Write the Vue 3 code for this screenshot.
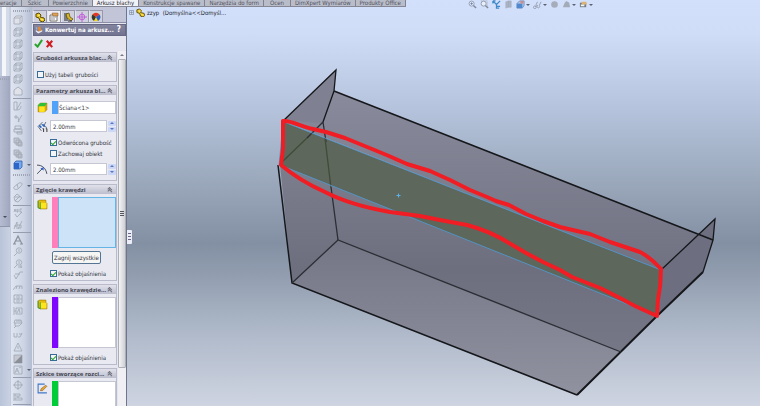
<script setup>
import { ref } from 'vue'

const commandTabs = ['eracje', 'Szkic', 'Powierzchnie', 'Arkusz blachy', 'Konstrukcje spawane', 'Narzędzia do form', 'Ocen', 'DimXpert Wymiarów', 'Produkty Office']
const activeTab = ref(3)

const viewTools = [
  { id: 'zoom-fit', name: 'Dopasuj' },
  { id: 'zoom-area', name: 'Powiększ obszar' },
  { id: 'prev', name: 'Poprzedni widok' },
  { id: 'section', name: 'Przekrój' },
  { id: 'orient', name: 'Orientacja', menu: true },
  { id: 'glasses', name: 'Ukryj', menu: true },
  { id: 'ball', name: 'Wygląd' },
  { id: 'scene', name: 'Scena', menu: true },
  { id: 'settings', name: 'Ustawienia', menu: true }
]

const sideTools = [
  'cube', 'wire', 'wire', 'wire', 'wire', 'wire', 'house', '-',
  'dim', 'plus', 'print', 'stack', 'stack', 'solid+', '=',
  'loop+', 'loopb', '-', 'abc', 'note', '-',
  'letter', 'balloon', 'balloons', 'rough', 'weld', 'table', 'datum', 'mag', 'hook', 'warn', 'hatch', 'block+', '-',
  'target', 'align', '-'
].map((t) => ({ id: t.replace('+', ''), menu: t.endsWith('+') }))

const managerTabs = ['part', 'props', 'config', 'dimx', 'display']

const useTable = ref(false)
const face = ref('Ściana<1>')
const thickness = ref('2.00mm')
const reversed = ref(true)
const keepBody = ref(false)
const radius = ref('2.00mm')
const calloutBends = ref(true)
const calloutRips = ref(true)
</script>

<template>
  <div class="app">
    <svg class="defs" aria-hidden="true">
      <defs>
        <g id="i-part">
          <path d="M1 2l3-1 2 2-1 2 4 1 1 2-2 2-3-1-1-3-3-1z" fill="#e9c71c" stroke="#5c4a08" stroke-width="1" />
          <path d="M3 3l2 1M6 7l2 1" stroke="#fff39a" stroke-width="1" />
        </g>
        <g id="i-face">
          <path d="M1 3l2-2h6v6l-2 2H1z" fill="#e0a800" stroke="#9a7800" stroke-width=".5" />
          <path d="M1 3l2-2h6L7 4H1z" fill="#2fc03a" />
          <path d="M2 4h5v5H2z" fill="#ffe51e" />
        </g>
        <g id="i-edge">
          <path d="M1 2l1-1h6v2l1 1v5H3V8H1z" fill="#e9bd0c" stroke="#9a7c00" stroke-width=".6" />
          <path d="M1 1.500v6.500l2 1V3" fill="none" stroke="#2fa23a" stroke-width=".8" />
          <path d="M3.500 3.500h5v5h-5z" fill="#ffe51e" />
        </g>
      </defs>
    </svg>

    <header class="top">
      <nav class="tabs">
        <button v-for="(t, i) in commandTabs" :key="t" :class="{ active: i === activeTab, short: t.length < 6 }" @click="activeTab = i">{{ t }}</button>
      </nav>
      <div class="view-tools">
        <button v-for="t in viewTools" :key="t.id" :aria-label="t.name" :class="{ menu: t.menu }">
          <svg viewBox="0 0 10 10">
            <template v-if="t.id === 'zoom-fit' || t.id === 'zoom-area'">
              <circle cx="4" cy="4" r="2.8" fill="#e8eefa" stroke="#8d98ab" />
              <path d="M6 6l3 3" stroke="#80899a" stroke-width="1.6" />
              <path v-if="t.id === 'zoom-fit'" d="M2.5 4h3M4 2.500v3" stroke="#57749f" stroke-width=".8" />
              <path v-else d="M1 1h7v7" fill="none" stroke="#a2a9b8" stroke-dasharray="1 1" />
            </template>
            <path v-else-if="t.id === 'prev'" d="M1 1l4 4M9 1L5 5v4h3M1 1h3M1 1v3M5 7h4" fill="none" stroke="#4089c8" stroke-width="1.4" />
            <path v-else-if="t.id === 'section'" d="M2 2l3-1v7l-3 1zM5 1h3v7H5z" fill="#aab3c5" stroke="#a0a9bb" stroke-width=".6" />
            <template v-else-if="t.id === 'orient'">
              <path d="M1 4l3-3h5v5L7 9H1z" fill="#a9c8ed" stroke="#5f83b4" stroke-width=".8" />
              <path d="M1 4h6v5H1z" fill="#5189d0" /><path d="M5 1h3v3H5z" fill="#d88783" />
            </template>
            <path v-else-if="t.id === 'glasses'" d="M3 7a1.500 1.500 0 1 1-2 0 1.500 1.500 0 0 1 2 0l2-1a1.500 1.500 0 1 0 2 0l2-4M3 6l2-4" fill="none" stroke="#818a9c" stroke-width=".8" />
            <circle v-else-if="t.id === 'ball'" cx="5" cy="5" r="3.700" fill="#a5adba" />
            <path v-else-if="t.id === 'scene'" d="M1 8l2-5 2-2 3 2 1 5z" fill="#a3abb9" />
            <template v-else>
              <path d="M1 3h7v5H1z" fill="#737a88" /><path d="M3 2h5l1 3H3z" fill="#ddb276" /><path d="M2 5h4v2H2z" fill="#f4f3ea" />
            </template>
          </svg>
        </button>
      </div>
    </header>

    <main class="body">
      <div class="gutter">
        <div class="slot"></div>
        <div class="dock"><i class="dots"></i><i class="arrow"></i></div>
      </div>

      <aside class="side">
        <i class="dots"></i>
        <template v-for="(t, i) in sideTools" :key="i">
          <hr v-if="t.id === '-'" />
          <i v-else-if="t.id === '='" class="dots split"></i>
          <button v-else :class="{ menu: t.menu }" :aria-label="t.id">
            <svg viewBox="0 0 10 10">
              <path v-if="t.id === 'cube'" d="M1 3l2-2h6v6L7 9H1zM1 3h6v6M7 3l2-2" fill="#dfe2e8" stroke="#a2a8b3" />
              <path v-else-if="t.id === 'wire'" d="M1 3l2-2h6v6L7 9H1zM1 3h6v6M7 3l2-2M3 1v6h6M3 7L1 9" />
              <path v-else-if="t.id === 'house'" d="M1 4l4-3 4 3v5H1z" fill="#dfe2e8" />
              <path v-else-if="t.id === 'dim'" d="M1 1h3v8H1zM4 8l4-7M4 9c3 0 4-2 4-4" />
              <path v-else-if="t.id === 'plus'" d="M1 4h4M3 2v4M5 9l4-7M5 4l1 5" />
              <path v-else-if="t.id === 'print'" d="M2 1h6v3H2zM1 4h8v3H1zM4 7h5v2H4z" />
              <path v-else-if="t.id === 'stack'" d="M1 1h5v5H1zM3 3h5v5H3zM5 5h4v4H5z" fill="#c5cad4" />
              <g v-else-if="t.id === 'solid'"><path d="M1 3l2-2h6v6L7 9H1z" fill="#77a9ee" stroke="#315da8" /><path d="M1 3h5v6H1z" fill="#2e66c8" stroke="none" /></g>
              <path v-else-if="t.id === 'loop'" d="M1 6l5-4c3-1 4 1 2 3L5 8C2 9 0 8 1 6zM4 3l1 4" />
              <path v-else-if="t.id === 'loopb'" d="M1 4l3-3 5 4-4 4-3-1zM2 8l5-5M2 4h5" />
              <path v-else-if="t.id === 'abc'" d="M1 4l1-3 1 3M4 1v3h1V1M9 1H7v3h2M2 6l2 3 5-5" />
              <path v-else-if="t.id === 'note'" d="M1 9l3-7v7M1 6h3M5 9l4-8M4 5h4v3H5" />
              <path v-else-if="t.id === 'letter'" class="bold" d="M1 9l4-8 4 8M3 6h4M0 9h3M7 9h3" />
              <g v-else-if="t.id === 'balloon' || t.id === 'balloons'"><circle cx="6" cy="3.500" r="2.700" /><path d="M4 6L1 9M6 2v3" /><path v-if="t.id === 'balloons'" d="M5 8h4M8 6v3" /></g>
              <path v-else-if="t.id === 'rough'" d="M1 5l2 4 4-7h3M2 4h5" />
              <path v-else-if="t.id === 'weld'" d="M0 8l3-4h6M3 7l1-3M6 7l1-3M9 7V4" />
              <path v-else-if="t.id === 'table'" d="M1 1h8v8H1zM1 5h8M3 3h1M6 3h1M3 7h1M6 7h1M5 1v8" />
              <path v-else-if="t.id === 'datum'" d="M1 1v8M3 2h6v6H3zM4 7l2-4 1 4M1 5h2" />
              <path v-else-if="t.id === 'mag'" d="M2 2h6l1 3H1zM2 5v3h4l3-3M3 3h5M3 8L1 10" />
              <path v-else-if="t.id === 'hook'" d="M1 3v4h3V3M5 7h2l2-4M6 4h3" />
              <path v-else-if="t.id === 'warn'" d="M5 1l4 8H1zM5 4v3" />
              <g v-else-if="t.id === 'hatch'"><path d="M1 1h8v8H1z" fill="#c5c8d0" /><path d="M9 1v8H1z" fill="#8b8f98" stroke="none" /></g>
              <path v-else-if="t.id === 'block'" d="M1 1h8v8H1zM2 8l2-5 2 5M3 6h2M6 3l2-1" />
              <g v-else-if="t.id === 'target'"><circle cx="5" cy="5" r="3.500" /><path d="M5 0v10M0 5h10" /></g>
              <path v-else d="M1 1v8M2 2h5v2H2zM2 6h7v2H2zM5 4v2" />
            </svg>
          </button>
        </template>
      </aside>

      <section class="panel">
        <nav class="manager">
          <button v-for="(m, i) in managerTabs" :key="m" :class="{ on: i === 1 }" :aria-label="m">
            <svg viewBox="0 0 10 10">
              <use v-if="m === 'part'" href="#i-part" />
              <g v-else-if="m === 'props'"><path d="M1 3h7v6H1z" fill="#fff" stroke="#77716a" /><path d="M2 5h5M2 7h4" stroke="#8a8f99" /><path d="M3 1h6v3H6L4 4z" fill="#dca15b" stroke="#80572b" stroke-width=".5" /></g>
              <g v-else-if="m === 'config'"><path d="M1 1h4v8H1z" fill="#777c82" /><path d="M3 2l3-1 1 4 3 2-2 2-4-3z" fill="#d6b624" stroke="#54480f" stroke-width=".7" /><path d="M5 9h4" stroke="#333" /></g>
              <g v-else-if="m === 'dimx'" fill="none" stroke="#c25ed8"><circle cx="5" cy="5" r="2.800" /><path d="M5 0v10M0 5h10" /></g>
              <g v-else><circle cx="5" cy="5" r="4.300" fill="#f3d522" /><path d="M5 5L1.500 2.500A4.300 4.300 0 0 1 8.500 2.500z" fill="#e33227" /><path d="M5 5l3.500-2.500A4.300 4.300 0 0 1 7 9z" fill="#2759c9" /><path d="M5 5L1.500 2.500A4.300 4.300 0 0 0 3 8.800z" fill="#353535" /></g>
            </svg>
          </button>
        </nav>

        <h1 class="title">
          <svg viewBox="0 0 10 10"><path d="M1 5l3 2 5-2v2L4 9.500 1 7z" fill="#e9eaf0" /><path d="M4 1h3v3l2 1-4 2-1-2z" fill="#e58a2c" /><path d="M1 1l2 1v3L1 4z" fill="#9aa8cf" /></svg>
          <span>Konwertuj na arkusz...</span>
          <button aria-label="Pomoc">?</button>
        </h1>

        <div class="confirm">
          <button aria-label="OK"><svg viewBox="0 0 10 10"><path d="M1 5.500l3 3L9 1" fill="none" stroke="#28a52d" stroke-width="2.200" /></svg></button>
          <button aria-label="Anuluj"><svg viewBox="0 0 10 10"><path d="M2 2l6 7M8 2L2 9" fill="none" stroke="#cf1d22" stroke-width="2.400" /></svg></button>
        </div>

        <div class="scroll">
          <div class="groups">
            <section class="group">
              <h2><span>Grubości arkusza blac...</span><i class="chev"></i></h2>
              <div class="content single">
                <label class="check"><input v-model="useTable" type="checkbox" />Użyj tabeli grubości</label>
              </div>
            </section>

            <section class="group">
              <h2><span>Parametry arkusza bl...</span><i class="chev"></i></h2>
              <div class="content params">
                <div class="row">
                  <svg viewBox="0 0 10 10"><use href="#i-face" /></svg>
                  <div class="pick blue"><input v-model="face" aria-label="Ściana" /></div>
                </div>
                <div class="row">
                  <svg viewBox="0 0 10 10"><path d="M1 5l4-4M1 5l3 4M4 3l5 3M8 1L6 5" fill="none" stroke="#536076" stroke-width=".8" /><path d="M2 4l2 2M5 3l2 2" stroke="#2b68c5" stroke-width="1.500" /><path d="M6 7v3M9 7v3M5 7h1M8 7h1" stroke="#222" stroke-width=".8" /></svg>
                  <input v-model="thickness" class="num" aria-label="Grubość" />
                  <div class="spin"><button aria-label="Więcej"></button><button aria-label="Mniej"></button></div>
                </div>
                <div class="checks">
                  <label class="check"><input v-model="reversed" type="checkbox" />Odwrócona grubość</label>
                  <label class="check"><input v-model="keepBody" type="checkbox" />Zachowaj obiekt</label>
                </div>
                <div class="row">
                  <svg viewBox="0 0 10 10"><path d="M0 1c5 0 8 3 9 8M0 9l6-6" fill="none" stroke="#343c4d" stroke-width=".8" /><path d="M3 4l3-1v3z" fill="#2d62c8" /></svg>
                  <input v-model="radius" class="num" aria-label="Promień" />
                  <div class="spin"><button aria-label="Więcej"></button><button aria-label="Mniej"></button></div>
                </div>
              </div>
            </section>

            <section class="group">
              <h2><span>Zgięcie krawędzi</span><i class="chev"></i></h2>
              <div class="content">
                <div class="row list">
                  <svg viewBox="0 0 10 10"><use href="#i-edge" /></svg>
                  <div class="pick pink focus" role="listbox" aria-label="Zgięcie krawędzi"><div class="box"></div></div>
                </div>
                <button class="collect">Zagnij wszystkie</button>
                <label class="check inset"><input v-model="calloutBends" type="checkbox" />Pokaż objaśnienia</label>
              </div>
            </section>

            <section class="group">
              <h2><span>Znaleziono krawędzie...</span><i class="chev"></i></h2>
              <div class="content">
                <div class="row list">
                  <svg viewBox="0 0 10 10"><use href="#i-edge" /></svg>
                  <div class="pick violet" role="listbox" aria-label="Znaleziono krawędzie"><div class="box"></div></div>
                </div>
                <label class="check inset"><input v-model="calloutRips" type="checkbox" />Pokaż objaśnienia</label>
              </div>
            </section>

            <section class="group">
              <h2><span>Szkice tworzące rozci...</span><i class="chev"></i></h2>
              <div class="content">
                <div class="row list">
                  <svg viewBox="0 0 10 10"><path d="M7 1H1v8h8" fill="none" stroke="#4077c9" /><path d="M3 7l1-2 4-3 1 1-4 4z" fill="#e9a831" stroke="#7a4d18" stroke-width=".5" /></svg>
                  <div class="pick green" role="listbox" aria-label="Szkice"><div class="box"></div></div>
                </div>
              </div>
            </section>
          </div>
          <div class="bar"><i class="up"></i><div class="thumb"><i></i></div></div>
        </div>
      </section>

      <section class="canvas">
        <div class="tree">
          <svg class="plus" viewBox="0 0 6 6"><path d="M.5.5h5v5h-5zM1.500 3h3M3 1.500v3" fill="none" stroke="#8992a3" /></svg>
          <svg class="part" viewBox="0 0 10 10"><use href="#i-part" /></svg>
          <span>zzyp&nbsp; (Domyślna&lt;&lt;Domyśl...</span>
        </div>
        <div class="handle"><i></i></div>
        <svg class="model" viewBox="127 7 633 399" preserveAspectRatio="xMidYMid meet">
          <defs>
            <linearGradient id="wall" x1="0" y1="0" x2="0" y2="1"><stop offset="0" stop-color="#898b9c" /><stop offset="1" stop-color="#707282" /></linearGradient>
            <linearGradient id="front" x1="0" y1="0" x2="0" y2="1"><stop offset="0" stop-color="#7c7e8d" /><stop offset=".45" stop-color="#6d6f7f" /><stop offset="1" stop-color="#7a7c8c" /></linearGradient>
            <linearGradient id="floor" x1="0" y1="0" x2="0" y2="1"><stop offset="0" stop-color="#747686" /><stop offset="1" stop-color="#9092a0" /></linearGradient>
          </defs>
          <path d="M334 91L713 240 661 270 283 121 323 122z" fill="url(#wall)" />
          <path d="M336 70L283 121 323 123 334 91z" fill="#7f8192" />
          <path d="M280 165L657 316 621 352 577 395 292 283z" fill="url(#front)" />
          <path d="M338 240L621 352 577 395 292 283z" fill="url(#floor)" />
          <path d="M715 219L661 270 657 316 703 272 713 240z" fill="#6d6f80" />
          <path d="M284 122L661 270 657 316 280 165z" fill="#5d675b" />
          <g fill="none" stroke="#15171b" stroke-width="1.300">
            <path d="M283 121L336 70 334 91 323 122" />
            <path d="M334 91L713 240" stroke-width="1.600" />
            <path d="M661 270L715 219 713 240 703 272" />
            <path d="M703 272L657 316 577 395" stroke-width="2" />
            <path d="M577 395L292 283 278 165" stroke-width="1.500" />
            <path d="M292 283L338 240 621 352" stroke="#2c2e34" />
            <path d="M323 122l3 20M331 187l7 53M323 122l-16 16" stroke="#2c2e34" />
            <path d="M307 138l-25 24M325 138l6 50" stroke="#424a38" />
          </g>
          <path d="M284 122L661 270M280 165L657 316M283 122l-4 44M661 270l-3 46" fill="none" stroke="#4f94ca" stroke-width=".9" />
          <path d="M396.500 195.500h4M398.500 193.500v4" stroke="#5db1ea" />
          <path d="M283 121C290 120 300 126 313 129L326 132 345 138 372 149 389 156 407 164 430 171 450 180 470 190 487 197 496 201 509 205 526 214 543 221 560 227 577 231 590 234 610 242 640 252Q650 257 661 269Q661 285 658 300L657 316 635 306 618 297 600 288 572 277 560 270 543 262 526 253 509 243Q490 231 467 225L440 220 420 216 390 212Q350 205 325 192Q300 181 281 165L283 148z" fill="none" stroke="#f01e24" stroke-width="4" stroke-linejoin="round" />
        </svg>
      </section>
    </main>
  </div>
</template>

<style>
body {
  margin: 0;
  overflow: hidden;
}
</style>

<style scoped>
* {
  box-sizing: border-box;
}
.app {
  height: 100vh;
  display: flex;
  flex-direction: column;
  font: 6px/8px "DejaVu Sans Condensed", "DejaVu Sans", "Liberation Sans", sans-serif;
  color: #30323c;
  background: linear-gradient(#d3e0fb 0, #d0ddf7 8%, #b3c2da 28%, #96a3b6 48%, #8390a3 60%, #929eb0 68%, #b1bbcb 83%, #ced4e1 100%);
}
.defs {
  position: absolute;
  width: 0;
  height: 0;
}
button {
  font: inherit;
  color: inherit;
  border: 0;
  padding: 0;
  margin: 0;
  background: none;
}
svg {
  display: block;
  flex: none;
}

.top {
  height: 7px;
  flex: none;
  display: flex;
  justify-content: space-between;
  z-index: 1;
}
.tabs {
  display: flex;
  background: #b9bdca;
  border-bottom: 1px solid #858894;
}
.tabs button {
  height: 6px;
  line-height: 6px;
  padding: 0 4px;
  border-right: 1px solid #80838f;
  color: #50525d;
  white-space: nowrap;
}
.tabs .short {
  padding: 0 6px;
}
.tabs button:first-child {
  padding-left: 0;
}
.tabs .active {
  background: #f1f3f8;
  color: #25262c;
}
.view-tools {
  display: flex;
  gap: 2px;
  padding-right: 166px;
}
.view-tools button {
  width: 10px;
  height: 9px;
}
.view-tools button.menu {
  width: 15px;
}
.view-tools svg {
  width: 9px;
  height: 9px;
}
.menu::after {
  content: "";
  width: 0;
  border: 2px solid transparent;
  border-top-color: #5b6170;
  border-bottom: 0;
}
.view-tools .menu {
  display: flex;
  align-items: center;
  gap: 1px;
}

.body {
  flex: 1;
  min-height: 0;
  display: flex;
}
.dots {
  display: block;
  height: 2px;
  flex: none;
  background: repeating-linear-gradient(90deg, #9ea5b6 0 1px, transparent 1px 2px);
}
.gutter {
  width: 10px;
  flex: none;
  display: flex;
  flex-direction: column;
  background: linear-gradient(90deg, #b9c3d9, #c9d2e3);
}
.slot {
  height: 69px;
  margin-right: 1px;
  background: linear-gradient(90deg, #c0cbe0 0 2px, #f4f6fa 2px 6px, #d3dae8 6px);
}
.dock {
  height: 151px;
  display: flex;
  flex-direction: column;
  justify-content: space-between;
  padding: 2px 1px 8px 0;
  background: linear-gradient(90deg, #b6bdd2, #9fa7bf);
  border-bottom: 1px solid #8f97aa;
}
.arrow {
  align-self: center;
  border: 2px solid transparent;
  border-top-color: #454b5b;
  border-bottom: 0;
}

.side {
  width: 22px;
  flex: none;
  display: flex;
  flex-direction: column;
  padding: 3px 1px 0 2px;
  background: linear-gradient(90deg, #dfe5f1, #cdd5e5 60%, #b3bdd2);
  border-left: 1px solid #c4ccdc;
  overflow: hidden;
}
.side > .dots {
  margin-bottom: 2px;
}
.side > .split {
  margin: 3px 0 4px;
}
.side button {
  flex: 1 1 0;
  min-height: 0;
  max-height: 14px;
  display: flex;
  align-items: center;
  gap: 4px;
}
.side svg {
  width: 10px;
  height: 10px;
  fill: none;
  stroke: #9fa6b3;
  stroke-width: 0.8;
}
.side .bold {
  stroke-width: 1.2;
  stroke: #8b919e;
}
.side hr {
  width: 100%;
  height: 1px;
  flex: none;
  border: 0;
  margin: 1px 0;
  background: #959daf;
}

.panel {
  width: 95px;
  flex: none;
  display: flex;
  flex-direction: column;
  background: #e5e6ef;
  border-right: 1px solid #70768a;
}
.manager {
  height: 16px;
  display: flex;
  align-items: flex-end;
  padding-left: 1px;
  background: #c1c5d7;
  border-bottom: 1px solid #8b8ea4;
}
.manager button {
  width: 14px;
  height: 12px;
  display: grid;
  place-items: center;
  background: #cfd1de;
  border: 1px solid #9799aa;
  border-bottom: 0;
  border-left-color: #e4e5ed;
}
.manager .on {
  background: #eeeef4;
}
.manager svg {
  width: 10px;
  height: 10px;
}
.title {
  height: 12px;
  margin: 1px 0 0 1px;
  padding: 0 4px 0 1px;
  display: flex;
  align-items: center;
  gap: 2px;
  font-size: 6px;
  font-weight: bold;
  color: #fff;
  background: linear-gradient(#84869f, #717391);
  border: 1px solid #666884;
  white-space: nowrap;
}
.title svg {
  width: 8px;
  height: 8px;
}
.title span {
  flex: 1;
}
.title button {
  font-size: 8px;
}
.confirm {
  display: flex;
  gap: 2px;
  padding: 3px 0 3px 2px;
}
.confirm svg {
  width: 9px;
  height: 9px;
}

.scroll {
  flex: 1;
  min-height: 0;
  display: flex;
}
.groups {
  flex: 1;
  min-width: 0;
  overflow: hidden;
  padding: 1px 1px 0;
  display: flex;
  flex-direction: column;
  gap: 3px;
}
.group {
  flex: none;
  border: 1px solid #b9bbca;
  background: #e9eaf1;
}
.group h2 {
  height: 9px;
  margin: 0;
  padding: 0 4px 0 2px;
  display: flex;
  align-items: center;
  justify-content: space-between;
  font-family: "Open Sans", "Liberation Sans", sans-serif;
  font-size: 6px;
  font-weight: bold;
  color: #454652;
  white-space: nowrap;
  background: linear-gradient(#e0e1ea, #bcbece);
}
.chev {
  width: 4px;
  height: 6px;
  display: flex;
  flex-direction: column;
  justify-content: space-between;
  padding-top: 1px;
}
.chev::before,
.chev::after {
  content: "";
  width: 3px;
  height: 3px;
  border: solid #6d6f7c;
  border-width: 1px 0 0 1px;
  transform: rotate(45deg);
}
.content {
  display: flex;
  flex-direction: column;
  padding: 3px 0 1px 3px;
}
.single {
  padding: 7px 3px 1px;
}
.params {
  padding: 6px 0 5px 3px;
  gap: 6px;
}
.row {
  display: flex;
  align-items: center;
}
.row > svg {
  width: 11px;
  height: 11px;
  margin-right: 2px;
}
.pick {
  flex: 1;
  min-width: 0;
  height: 13px;
  margin-left: 2px;
  display: flex;
  border-left: 6px solid #4fa2f7;
}
.pick input,
.num {
  min-width: 0;
  flex: 1;
  width: 0;
  height: 12px;
  padding: 0 2px;
  border: 1px solid #c5c8d3;
  background: #fff;
  font: inherit;
  color: inherit;
  outline: 0;
}
.pick input {
  height: 13px;
  padding: 0;
}
.spin {
  width: 9px;
  display: flex;
  flex-direction: column;
  gap: 1px;
  padding-left: 1px;
}
.spin button {
  height: 5px;
  display: grid;
  place-items: center;
  background: #cdd7f6;
  border-radius: 1px;
}
.spin button::before {
  content: "";
  border: 2px solid transparent;
  border-bottom-color: #5b76bd;
  border-top: 0;
}
.spin button:last-child::before {
  border: 2px solid transparent;
  border-top-color: #5b76bd;
  border-bottom: 0;
}
.check {
  display: flex;
  align-items: center;
  gap: 1px;
  height: 11px;
  white-space: nowrap;
}
.check input {
  appearance: none;
  width: 7px;
  height: 7px;
  margin: 0;
  flex: none;
  display: grid;
  place-items: center;
  border: 1px solid #386b98;
  background: #f4f5f6;
}
.check input:checked::before {
  content: "";
  width: 4px;
  height: 2px;
  border: solid #29a52d;
  border-width: 0 0 1px 1px;
  transform: rotate(-45deg);
}
.checks {
  padding-left: 13px;
  margin: -1px 0 -2px;
}
.inset {
  margin-left: 13px;
  margin-top: 4px;
}
.list {
  align-items: flex-start;
}
.list > svg {
  margin-top: 2px;
}
.list .pick {
  height: 51px;
}
.box {
  flex: 1;
  background: #fff;
  border: 1px solid #c5c8d3;
}
.pink {
  border-left-color: #ff7fbd;
}
.violet {
  border-left-color: #7f06ff;
}
.green {
  border-left-color: #00cc38;
}
.focus .box {
  background: #cde3f8;
  border-color: #64b4e6;
}
.collect {
  align-self: flex-start;
  height: 13px;
  margin: 3px 0 0 15px;
  padding: 0 1px;
  border: 1px solid #557595;
  border-radius: 2px;
  background: #f5f5f3;
  white-space: nowrap;
}
.bar {
  width: 8px;
  flex: none;
  display: flex;
  flex-direction: column;
  align-items: center;
  background: #f0f0f4;
}
.up {
  margin: 3px 0;
  border: 2px solid transparent;
  border-bottom-color: #777985;
  border-top: 0;
}
.thumb {
  width: 8px;
  height: 87%;
  display: grid;
  place-items: center;
  border: 1px solid #adafb8;
  border-radius: 1px;
  background: linear-gradient(90deg, #f4f4f5, #cfd0d4);
}
.thumb i {
  width: 4px;
  height: 5px;
  background: repeating-linear-gradient(#54565f 0 1px, transparent 1px 2px);
}

.canvas {
  flex: 1;
  min-width: 0;
  position: relative;
  overflow: hidden;
}
.model {
  width: 100%;
  height: 100%;
}
.tree {
  position: absolute;
  top: 1px;
  left: 2px;
  display: flex;
  align-items: center;
  gap: 2px;
  color: #20242c;
  white-space: nowrap;
}
.plus {
  width: 5px;
  height: 5px;
}
.part {
  width: 9px;
  height: 9px;
}
.handle {
  position: absolute;
  top: 223px;
  left: 0;
  width: 5px;
  height: 14px;
  padding: 3px 1px;
  background: #eceef7;
  border-radius: 0 1px 1px 0;
}
.handle i {
  display: block;
  height: 8px;
  background: repeating-linear-gradient(#6d6688 0 1px, transparent 1px 3px);
}
</style>
